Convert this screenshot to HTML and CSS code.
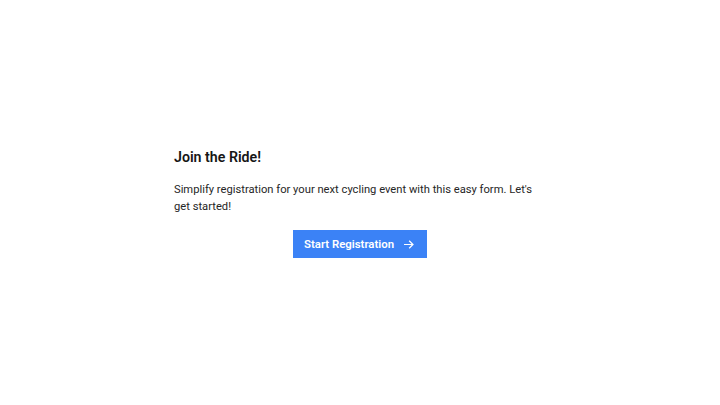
FILE: index.html
```html
<!DOCTYPE html>
<html lang="en">
<head>
<meta charset="utf-8">
<title>Join the Ride</title>
<link rel="stylesheet" href="styles.css">
</head>
<body>
<main class="page">
  <section class="intro">
    <h1 class="title">Join the Ride!</h1>
    <p class="lead">Simplify registration for your next cycling event with this easy form. Let's get started!</p>
    <div class="actions">
      <button class="btn" type="button">
        <span>Start Registration</span>
        <svg class="btn-icon" width="11" height="11" viewBox="0 0 16 16" aria-hidden="true"><path d="M9 2.5l5.5 5.5-5.5 5.5M14.5 8H1.5" fill="none" stroke="#fff" stroke-width="1.8"/></svg>
      </button>
    </div>
  </section>
</main>
</body>
</html>
```
FILE: styles.css
```css
* { box-sizing: border-box; }
html, body { margin: 0; padding: 0; background: #ffffff; }
body {
  font-family: "Roboto", "Noto Sans", sans-serif;
  color: #161616;
}
.page {
  min-height: 100vh;
  display: flex;
  align-items: center;
  justify-content: center;
}
.intro {
  width: 372px;
  display: flex;
  flex-direction: column;
}
.title {
  margin: 0 0 14px 0;
  font-size: 14.2px;
  line-height: 20px;
  font-weight: 600;
}
.lead {
  margin: 0 0 15px 0;
  font-size: 11.2px;
  line-height: 17px;
  font-weight: 400;
  color: #262626;
}
.actions {
  display: flex;
  justify-content: center;
}
.btn {
  height: 28px;
  width: 134px;
  display: flex;
  align-items: center;
  justify-content: space-between;
  padding: 0 13px 0 11px;
  border: 0;
  background: #3b82f6;
  color: #ffffff;
  font-family: inherit;
  font-size: 11.4px;
  font-weight: 600;
  white-space: nowrap;
  cursor: pointer;
}
.btn-icon { display: block; }
```
